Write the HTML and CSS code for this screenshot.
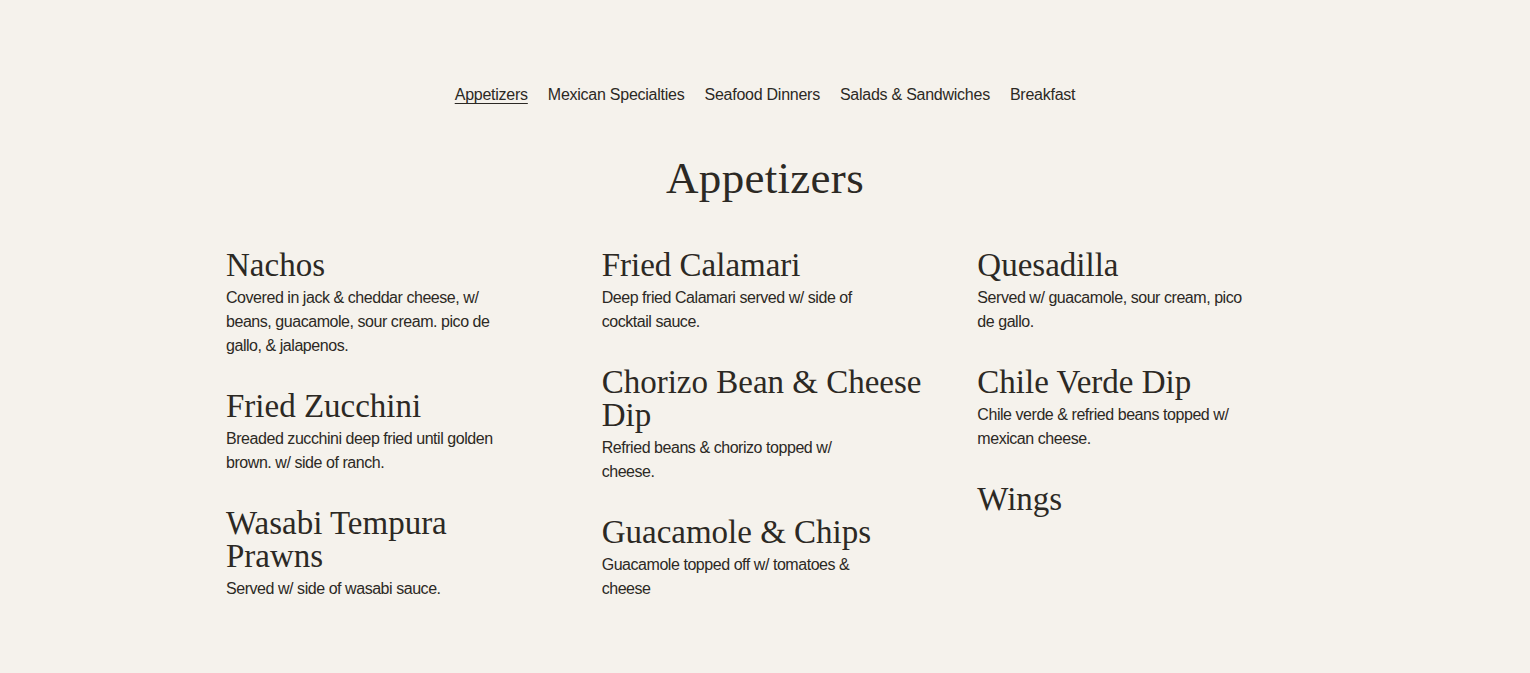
FILE: index.html
```html
<!DOCTYPE html>
<html lang="en">
<head>
    <meta charset="UTF-8">
    <meta name="viewport" content="width=device-width, initial-scale=1.0">
    <title>Menu - Appetizers</title>
    <link rel="stylesheet" href="styles.css">
</head>
<body>
    <div class="container">
        <nav class="menu-nav">
            <a href="#" class="active">Appetizers</a>
            <a href="#">Mexican Specialties</a>
            <a href="#">Seafood Dinners</a>
            <a href="#">Salads &amp; Sandwiches</a>
            <a href="#">Breakfast</a>
        </nav>

        <h1 class="section-title">Appetizers</h1>

        <div class="menu-grid">
            <div class="menu-col">
                <div class="menu-item">
                    <h2>Nachos</h2>
                    <p>Covered in jack &amp; cheddar cheese, w/ beans, guacamole, sour cream. pico de gallo, &amp; jalapenos.</p>
                </div>
                <div class="menu-item">
                    <h2>Fried Zucchini</h2>
                    <p>Breaded zucchini deep fried until golden brown. w/ side of ranch.</p>
                </div>
                <div class="menu-item">
                    <h2>Wasabi Tempura Prawns</h2>
                    <p>Served w/ side of wasabi sauce.</p>
                </div>
            </div>
            <div class="menu-col">
                <div class="menu-item">
                    <h2>Fried Calamari</h2>
                    <p>Deep fried Calamari served w/ side of cocktail sauce.</p>
                </div>
                <div class="menu-item">
                    <h2>Chorizo Bean &amp; Cheese Dip</h2>
                    <p>Refried beans &amp; chorizo topped w/ cheese.</p>
                </div>
                <div class="menu-item">
                    <h2>Guacamole &amp; Chips</h2>
                    <p>Guacamole topped off w/ tomatoes &amp; cheese</p>
                </div>
            </div>
            <div class="menu-col">
                <div class="menu-item">
                    <h2>Quesadilla</h2>
                    <p>Served w/ guacamole, sour cream, pico de gallo.</p>
                </div>
                <div class="menu-item">
                    <h2>Chile Verde Dip</h2>
                    <p>Chile verde &amp; refried beans topped w/ mexican cheese.</p>
                </div>
                <div class="menu-item">
                    <h2>Wings</h2>
                </div>
            </div>
        </div>
    </div>
</body>
</html>
```

FILE: styles.css
```css
* {
    margin: 0;
    padding: 0;
    box-sizing: border-box;
}

body {
    background: #f5f2ec;
    color: #2c2924;
    font-family: 'Liberation Sans', Arial, sans-serif;
    padding-top: 83px;
}

.container {
    width: 1078px;
    margin: 0 auto;
}

.menu-nav {
    display: flex;
    justify-content: center;
    gap: 20px;
    font-size: 16px;
    line-height: 24px;
    letter-spacing: -0.25px;
}

.menu-nav a {
    color: #2c2924;
    text-decoration: none;
}

.menu-nav a.active {
    text-decoration: underline;
    text-underline-offset: 3px;
    text-decoration-thickness: 1px;
}

.section-title {
    font-family: 'Liberation Serif', 'Times New Roman', serif;
    font-weight: normal;
    font-size: 45px;
    line-height: 53px;
    letter-spacing: 0.3px;
    text-align: center;
    margin-top: 45px;
}

.menu-grid {
    display: grid;
    grid-template-columns: repeat(3, 1fr);
    column-gap: 49px;
    margin-top: 43.5px;
}

.menu-col {
    display: flex;
    flex-direction: column;
    gap: 31.5px;
}

.menu-item h2 {
    max-width: 322px;
    font-family: 'Liberation Serif', 'Times New Roman', serif;
    font-weight: normal;
    font-size: 33px;
    line-height: 33px;
}

.menu-item p {
    margin-top: 4.5px;
    max-width: 285px;
    font-size: 16px;
    line-height: 24px;
    letter-spacing: -0.45px;
}
```
